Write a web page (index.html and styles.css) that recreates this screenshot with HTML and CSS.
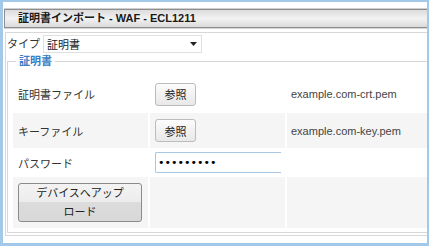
FILE: index.html
```html
<!DOCTYPE html>
<html lang="ja">

<head>
  <title>証明書インポート</title>
  <meta charset="UTF-8">
  <link rel="stylesheet" href="styles.css">
</head>

<body>
  <div class="window">
    <div class="titlebar">証明書インポート - WAF - ECL1211</div>

    <div class="panel">
      <div class="type-row">
        <label class="type-label">タイプ</label>
        <div class="select">
          <span>証明書</span>
          <svg class="select-arrow" width="7" height="4" viewBox="0 0 7 4"><path d="M0 0h7L3.5 4z" /></svg>
        </div>
      </div>

      <fieldset class="cert">
        <legend>証明書</legend>
        <div class="form-grid">
          <div class="cell">証明書ファイル</div>
          <div class="cell"><button class="btn">参照</button></div>
          <div class="cell file-name">example.com-crt.pem</div>

          <div class="cell alt">キーファイル</div>
          <div class="cell alt"><button class="btn">参照</button></div>
          <div class="cell alt file-name">example.com-key.pem</div>

          <div class="cell">パスワード</div>
          <div class="cell"><input class="password" type="password" value="password1"></div>
          <div class="cell"></div>

          <div class="cell alt"><button class="btn-upload">デバイスへアップロード</button></div>
          <div class="cell alt"></div>
          <div class="cell alt"></div>
        </div>
      </fieldset>
    </div>
  </div>
</body>

</html>
```

FILE: styles.css
```css
:root {
  --frame-blue: #a2c8ea;
  --line: #d8d8d8;
  --alt-bg: #f5f5f5;
  --text: #333;
  --legend: #3b7dc4;
}

* {
  box-sizing: border-box;
  margin: 0;
  padding: 0;
}

body {
  font-family: "Liberation Sans", "Noto Sans CJK JP", sans-serif;
  font-size: 11px;
  color: var(--text);
  background: #fff;
}

.window {
  width: 429px;
  height: 246px;
  border: 3px solid var(--frame-blue);
  border-top-width: 2px;
  border-right-width: 2px;
  padding-left: 1px;
  background: #fff;
  overflow: hidden;
}

.titlebar {
  margin: 7px -8px 0 0;
  height: 19px;
  border: 1px solid #8e8e8e;
  border-right: 0;
  padding-left: 13px;
  line-height: 17px;
  font-weight: bold;
  color: #1a1a1a;
  background: linear-gradient(#dcdcdc, #f2f2f2 50%, #dadada);
  box-shadow: 0 -1px 0 #cfcfcf, 0 1px 0 #d4d4d4;
}

.panel {
  margin: 4px -10px 0 1px;
  border: 1px solid var(--line);
  border-right: 0;
  padding: 2px 0 2px 1px;
}

/* type selector row */
.type-row {
  display: flex;
  align-items: center;
  gap: 3px;
  height: 18px;
}

.type-label {
  flex: 0 0 33px;
  white-space: nowrap;
  line-height: 18px;
}

.select {
  flex: 0 0 159px;
  height: 18px;
  border: 1px solid #e0e0e0;
  padding: 0 4px 0 3px;
  display: flex;
  align-items: center;
  justify-content: space-between;
  color: #222;
}

.select-arrow {
  fill: #222;
}

/* certificate fieldset */
.cert {
  margin-top: 2px;
  border: 0;
  border-top: 1px solid var(--line);
  border-left: 1px solid var(--line);
  border-bottom: 1px solid var(--line);
  padding: 8px 0 4px 5px;
}

.cert legend {
  margin-left: 3px;
  padding: 0 3px;
  line-height: 13px;
  font-weight: bold;
  color: var(--legend);
}

.form-grid {
  display: grid;
  grid-template-columns: 135px 135px 1fr;
  grid-template-rows: 36px 35px 27px 51px;
  column-gap: 2px;
  row-gap: 1px;
}

.cell {
  display: flex;
  align-items: center;
  padding-left: 5px;
}

.cell.alt {
  background: var(--alt-bg);
}

.file-name {
  padding-left: 4px;
  color: #444;
}

.btn {
  width: 41px;
  height: 23px;
  border: 1px solid #bcbcbc;
  border-radius: 3px;
  background: linear-gradient(#fcfcfc, #e8e8e8);
  font: inherit;
  color: #222;
}

.password {
  width: 126px;
  height: 21px;
  border: 1px solid #a8c8e6;
  border-right: 0;
  border-radius: 2px 0 0 2px;
  padding: 0 2px;
  font-family: "DejaVu Sans", sans-serif;
  font-size: 11px;
  color: #000;
  outline: none;
}

.btn-upload {
  width: 124px;
  height: 39px;
  border: 1px solid #8a8a8a;
  border-radius: 3px;
  padding: 0 16px;
  background: linear-gradient(#f3f3f3 0, #ececec 50%, #dcdcdc 50%, #d8d8d8 100%);
  font: inherit;
  line-height: 19px;
  color: #222;
}
```
